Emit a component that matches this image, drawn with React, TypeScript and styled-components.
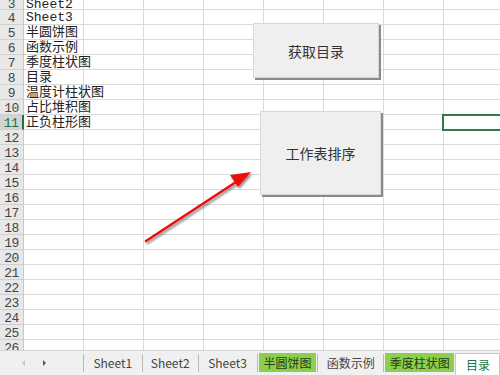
import React from "react";
import styled, { createGlobalStyle } from "styled-components";

const Global = createGlobalStyle`
  html, body { margin: 0; padding: 0; background: #fff; }
  body { width: 500px; height: 375px; overflow: hidden; }
`;

const Page = styled.div`
  width: 500px;
  height: 375px;
  display: flex;
  flex-direction: column;
  overflow: hidden;
  font-family: "Liberation Mono", "Noto Sans CJK SC", monospace;
`;

const SheetArea = styled.div`
  position: relative;
  height: 350px;
  overflow: hidden;
`;

const Grid = styled.div`
  display: grid;
  grid-template-columns: 24px repeat(8, 60px);
  grid-template-rows: 10px;
  grid-auto-rows: 15px;
`;

const RowHead = styled.div<{ $active?: boolean; $partial?: boolean }>`
  box-sizing: border-box;
  background: ${(p) => (p.$active ? "#d3d3d3" : "#e8e8e8")};
  border-right: ${(p) => (p.$active ? "2px solid #217346" : "1px solid #c8c8c8")};
  border-bottom: 1px solid #d0d0d0;
  color: ${(p) => (p.$active ? "#217346" : "#444")};
  font-size: 13px;
  line-height: ${(p) => (p.$partial ? "10px" : "15px")};
  padding-top: ${(p) => (p.$partial ? "0" : "1px")};
  text-align: center;
  letter-spacing: -0.5px;
  overflow: hidden;
`;

const Cell = styled.div<{ $partial?: boolean }>`
  box-sizing: border-box;
  border-right: 1px solid #dadada;
  border-bottom: 1px solid #dadada;
  font-size: 13px;
  line-height: ${(p) => (p.$partial ? "10px" : "14px")};
  padding: ${(p) => (p.$partial ? "0 0 0 2px" : "1px 0 0 2px")};
  color: #222;
  white-space: nowrap;
`;

const MacroButton = styled.div<{ $x: number; $y: number; $w: number; $h: number }>`
  position: absolute;
  left: ${(p) => p.$x}px;
  top: ${(p) => p.$y}px;
  width: ${(p) => p.$w}px;
  height: ${(p) => p.$h}px;
  box-sizing: border-box;
  background: #efefef;
  border: 1px solid #d8d8d8;
  box-shadow: 2px 2px 0 #8a8a8a;
  display: flex;
  align-items: center;
  justify-content: center;
  font-family: "Noto Sans CJK SC", sans-serif;
  font-size: 14px;
  color: #333;
`;

const Selection = styled.div`
  position: absolute;
  left: 442px;
  top: 114px;
  width: 70px;
  height: 17px;
  box-sizing: border-box;
  border: 2px solid #2f7a4f;
`;

const ArrowSvg = styled.svg`
  position: absolute;
  left: 0;
  top: 0;
  pointer-events: none;
`;

const TabBar = styled.div`
  height: 25px;
  background: #f0f0f0;
  border-top: 1px solid #d4d4d4;
  box-sizing: border-box;
  display: flex;
  align-items: stretch;
  font-family: "Noto Sans CJK SC", sans-serif;
  font-size: 12px;
`;

const NavArea = styled.div`
  width: 83px;
  display: flex;
  align-items: center;
  box-sizing: border-box;
  padding-left: 22px;
  gap: 18px;
`;

const NavArrow = styled.span<{ $dir: "l" | "r"; $on?: boolean }>`
  width: 0;
  height: 0;
  border-top: 3px solid transparent;
  border-bottom: 3px solid transparent;
  ${(p) =>
    p.$dir === "l"
      ? `border-right: 3px solid ${p.$on ? "#217346" : "#c4c4c4"};`
      : `border-left: 3px solid ${p.$on ? "#217346" : "#c4c4c4"};`}
`;

const Tab = styled.div<{ $w: number; $active?: boolean }>`
  width: ${(p) => p.$w}px;
  box-sizing: border-box;
  display: flex;
  align-items: center;
  justify-content: center;
  position: relative;
  color: ${(p) => (p.$active ? "#217346" : "#444")};
  background: ${(p) => (p.$active ? "#fff" : "transparent")};
  margin-top: ${(p) => (p.$active ? "2px" : "0")};
  border: ${(p) => (p.$active ? "1px solid #c8c8c8" : "none")};
  border-bottom: none;
  &::before {
    content: "";
    position: absolute;
    left: 0;
    top: 3px;
    bottom: 3px;
    width: 1px;
    background: ${(p) => (p.$active ? "transparent" : "#b8b8b8")};
  }
`;

const TabFill = styled.span<{ $green?: boolean }>`
  display: flex;
  align-items: center;
  justify-content: center;
  align-self: stretch;
  margin: 2px 1px 3px 2px;
  flex: 1;
  background: ${(p) => (p.$green ? "#8ccf4d" : "transparent")};
  color: ${(p) => (p.$green ? "#2a3a1a" : "inherit")};
`;

const cellText: Record<number, string> = {
  3: "Sheet2",
  4: "Sheet3",
  5: "半圆饼图",
  6: "函数示例",
  7: "季度柱状图",
  8: "目录",
  9: "温度计柱状图",
  10: "占比堆积图",
  11: "正负柱形图",
};

const rows = Array.from({ length: 24 }, (_, i) => i + 3);

const tabs: { label: string; w: number; green?: boolean; active?: boolean }[] = [
  { label: "Sheet1", w: 59 },
  { label: "Sheet2", w: 56 },
  { label: "Sheet3", w: 59 },
  { label: "半圆饼图", w: 61, green: true },
  { label: "函数示例", w: 66 },
  { label: "季度柱状图", w: 72, green: true },
  { label: "目录", w: 45, active: true },
];

export default function App() {
  return (
    <Page>
      <Global />
      <SheetArea>
        <Grid>
          {rows.map((r) => (
            <React.Fragment key={r}>
              <RowHead $active={r === 11} $partial={r === 3}>{r}</RowHead>
              {Array.from({ length: 8 }, (_, c) => (
                <Cell key={c} $partial={r === 3}>{c === 0 ? cellText[r] ?? "" : ""}</Cell>
              ))}
            </React.Fragment>
          ))}
        </Grid>
        <MacroButton $x={253} $y={23} $w={126} $h={55}>获取目录</MacroButton>
        <MacroButton $x={260} $y={111} $w={121} $h={84}>工作表排序</MacroButton>
        <Selection />
        <ArrowSvg width="500" height="350" viewBox="0 0 500 350">
          <defs>
            <filter id="sh" x="-20%" y="-20%" width="140%" height="140%">
              <feDropShadow dx="1.5" dy="2" stdDeviation="1.2" floodColor="#000" floodOpacity="0.45" />
            </filter>
          </defs>
          <g filter="url(#sh)">
            <line x1="146" y1="241" x2="236" y2="182" stroke="#ee1111" strokeWidth="2.6" strokeLinecap="round" />
            <polygon points="251,172 230,175 238,187" fill="#ee1111" />
          </g>
        </ArrowSvg>
      </SheetArea>
      <TabBar>
        <NavArea>
          <NavArrow $dir="l" />
          <NavArrow $dir="r" $on />
        </NavArea>
        {tabs.map((t) => (
          <Tab key={t.label} $w={t.w} $active={t.active}>
            <TabFill $green={t.green}>{t.label}</TabFill>
          </Tab>
        ))}
      </TabBar>
    </Page>
  );
}
